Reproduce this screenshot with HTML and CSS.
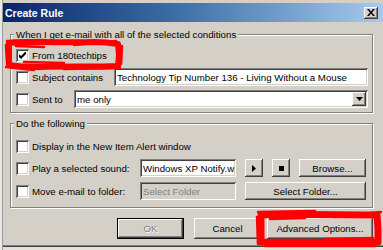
FILE: index.html
```html
<!DOCTYPE html>
<html>
<head>
<meta charset="utf-8">
<title>Create Rule</title>
<link rel="stylesheet" href="styles.css">
</head>
<body>
<div class="screen">
  <div class="outside"></div>
  <div class="dialog">
    <div class="titlebar">
      <span class="title">Create Rule</span>
      <span class="close"><svg width="8" height="7" viewBox="0 0 8 7"><path d="M0 0h2l2 2.5L6 0h2L5 3.5 8 7H6L4 4.5 2 7H0l3-3.5z" fill="#000"/></svg></span>
    </div>
    <div class="content">
      <fieldset class="group g1">
        <legend>When I get e-mail with all of the selected conditions</legend>
        <div class="row">
          <span class="cb"><svg width="7" height="7" viewBox="0 0 7 7"><path d="M0 2v3l2 2 5-5V-1L2 4z" fill="#000"/></svg></span>
          <span class="label">From 180techtips</span>
        </div>
        <div class="row">
          <span class="cb"></span>
          <span class="label w-subject">Subject contains</span>
          <span class="field grow">Technology Tip Number 136 - Living Without a Mouse</span>
        </div>
        <div class="row">
          <span class="cb"></span>
          <span class="label w-sent">Sent to</span>
          <span class="field grow combo"><span class="combo-text">me only</span><span class="drop"><svg width="7" height="4" viewBox="0 0 7 4"><path d="M0 0h7L3.5 4z" fill="#000"/></svg></span></span>
        </div>
      </fieldset>
      <fieldset class="group g2">
        <legend>Do the following</legend>
        <div class="row">
          <span class="cb"></span>
          <span class="label">Display in the New Item Alert window</span>
        </div>
        <div class="row">
          <span class="cb"></span>
          <span class="label w-action">Play a selected sound:</span>
          <span class="field sound">Windows XP Notify.w</span>
          <span class="btn small"><svg width="4" height="7" viewBox="0 0 4 7"><path d="M0 0l4 3.5L0 7z" fill="#000"/></svg></span>
          <span class="btn small"><svg width="5" height="5" viewBox="0 0 5 5"><rect width="5" height="5" fill="#000"/></svg></span>
          <span class="btn browse">Browse...</span>
        </div>
        <div class="row row3">
          <span class="cb"></span>
          <span class="label w-action">Move e-mail to folder:</span>
          <span class="field sound disabled">Select Folder</span>
          <span class="btn folder">Select Folder...</span>
        </div>
      </fieldset>
      <div class="buttons">
        <span class="btn dlg default disabled-text">OK</span>
        <span class="btn dlg cancel">Cancel</span>
        <span class="btn dlg adv">Advanced Options...</span>
      </div>
    </div>
  </div>
  <svg class="scribble s1" width="122" height="36" viewBox="0 0 122 36">
    <path d="M5 6 C30 4 60 6 90 5 C100 5 108 6 114 7 L115 18 L114 29 C90 30 60 29 35 30 C20 30 10 29 5 28 L5 17 Z" fill="none" stroke="#f00" stroke-width="6" stroke-linejoin="round"/>
    <path d="M3 4 L40 3 M70 8 L112 4 M118 9 L117 27 M2 30 L30 33 M60 32 L116 31 M2 8 L3 26 M12 9 L40 10 M20 25 L60 26" fill="none" stroke="#f00" stroke-width="2.5" stroke-linecap="round"/>
  </svg>
  <svg class="scribble s2" width="130" height="40" viewBox="0 0 130 40">
    <path d="M6 6 C40 5 80 6 122 6 L123 20 L123 33 C90 34 50 33 6 33 L6 20 Z" fill="none" stroke="#f00" stroke-width="7" stroke-linejoin="round"/>
    <path d="M3 3 L60 2 M80 8 L126 3 M2 8 L3 35 M10 37 L120 37 M15 10 L50 9 M70 30 L118 29" fill="none" stroke="#f00" stroke-width="2.5" stroke-linecap="round"/>
  </svg>
</div>
</body>
</html>
```
FILE: styles.css
```css
* { box-sizing: border-box; }
html, body { margin: 0; padding: 0; }
body {
  width: 383px;
  height: 250px;
  overflow: hidden;
  background: #e4e2dc;
  font-family: "Liberation Sans", Arial, sans-serif;
  font-size: 9.7px;
  color: #000;
}
.screen {
  position: relative;
  width: 383px;
  height: 250px;
  display: flex;
  align-items: flex-start;
}
.outside {
  width: 3px;
  height: 250px;
  background: #e8e8e8;
  border-right: 1px solid #9a9a9a;
}
.dialog {
  flex: 1;
  height: 247px;
  background: #d4d0c8;
  padding: 3px 0 0 0;
  border-bottom: 1px solid #404040;
  box-shadow: inset 0 -1px 0 #808080;
}
.titlebar {
  height: 19px;
  display: flex;
  align-items: center;
  justify-content: space-between;
  background: linear-gradient(to right, #0a246a 0%, #3a6ea5 45%, #a6caf0 100%);
  padding: 0 5px 0 2px;
}
.title {
  color: #fff;
  font-weight: bold;
  font-size: 10.5px;
}
.close {
  width: 14px;
  height: 12px;
  background: #d4d0c8;
  display: flex;
  align-items: center;
  justify-content: center;
  box-shadow: inset -1px -1px #404040, inset 1px 1px #fff, inset -2px -2px #808080;
}
.content {
  margin-left: 7px;
  width: 363px;
}
.group {
  margin: 6px 0 0;
  padding: 3px 4px 2px 5px;
  border: 1px solid #808080;
  box-shadow: 1px 1px 0 #fff, inset 1px 1px 0 #fff;
  min-inline-size: 0;
}
.group legend {
  padding: 0 2px;
  margin-left: -2px;
  line-height: 13px;
  background: #d4d0c8;
}
.g2 {
  margin-top: 4px;
  padding-top: 5px;
  padding-bottom: 5px;
}
.row {
  display: flex;
  align-items: center;
  height: 22px;
}
.row3 { margin-top: 1px; }
.cb {
  width: 13px;
  height: 13px;
  flex: none;
  background: #fff;
  margin-right: 3px;
  display: flex;
  align-items: center;
  justify-content: center;
  box-shadow: inset 1px 1px #808080, inset -1px -1px #fff, inset 2px 2px #404040, inset -2px -2px #d4d0c8;
}
.label { white-space: nowrap; }
.w-subject { width: 82px; flex: none; }
.w-sent { width: 42px; flex: none; }
.w-action { width: 108px; flex: none; }
.field {
  height: 18px;
  background: #fff;
  display: flex;
  align-items: center;
  padding: 0 3px;
  white-space: nowrap;
  overflow: hidden;
  box-shadow: inset 1px 1px #808080, inset -1px -1px #fff, inset 2px 2px #404040, inset -2px -2px #d4d0c8;
}
.grow { flex: 1; }
.combo { padding-right: 2px; justify-content: space-between; }
.drop {
  width: 14px;
  height: 14px;
  background: #d4d0c8;
  display: flex;
  align-items: center;
  justify-content: center;
  box-shadow: inset -1px -1px #404040, inset 1px 1px #fff, inset -2px -2px #808080;
}
.sound { width: 96px; flex: none; }
.disabled { background: #d4d0c8; color: #808080; }
.btn {
  height: 18px;
  background: #d4d0c8;
  display: flex;
  align-items: center;
  justify-content: center;
  white-space: nowrap;
  box-shadow: inset -1px -1px #404040, inset 1px 1px #fff, inset -2px -2px #808080, inset 2px 2px #d4d0c8;
}
.small { width: 18px; margin-left: 9px; flex: none; }
.browse { width: 67px; margin-left: 9px; flex: none; }
.folder { width: 121px; margin-left: 9px; flex: none; }
.buttons {
  display: flex;
  justify-content: flex-end;
  margin-top: 10px;
}
.dlg { height: 21px; }
.default {
  width: 67px;
  box-shadow: inset 0 0 0 1px #000, inset -2px -2px #404040, inset 2px 2px #fff, inset -3px -3px #808080;
}
.disabled-text { color: #808080; text-shadow: 1px 1px 0 #fff; }
.cancel { width: 67px; margin-left: 10px; }
.adv { width: 106px; margin-left: 6px; }
.scribble { position: absolute; pointer-events: none; }
.s1 { left: 4px; top: 37px; }
.s2 { left: 255px; top: 209px; }
```
